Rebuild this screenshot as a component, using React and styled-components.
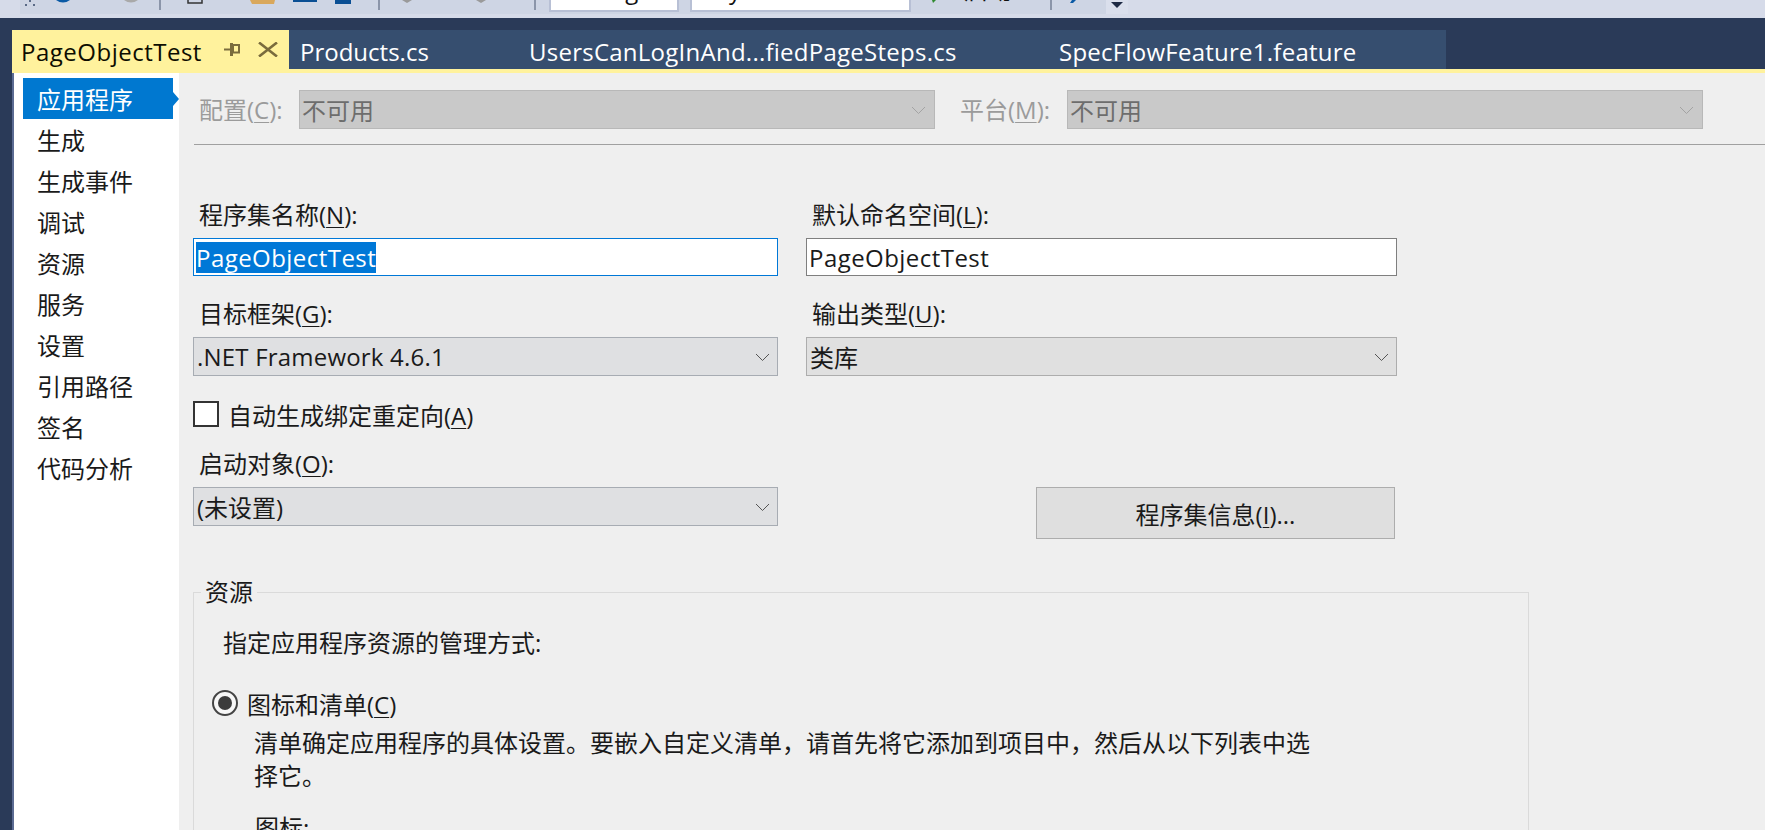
import React from 'react';
import styled, { createGlobalStyle } from 'styled-components';

const GlobalStyle = createGlobalStyle`
  html, body {
    margin: 0;
    padding: 0;
    overflow: hidden;
    background: #2a3a58;
  }
  * {
    box-sizing: border-box;
  }
`;

const Page = styled.div`
  width: 1765px;
  height: 830px;
  overflow: hidden;
  display: flex;
  flex-direction: column;
  background: #2a3a58;
  color: #1a1a1a;
  font-family: 'Open Sans', 'Noto Sans CJK SC', sans-serif;
  font-size: 24px;
`;

/* toolbar: only the lower edge of it is in the picture */
const Toolbar = styled.div`
  height: 18px;
  flex: none;
  display: flex;
  align-items: flex-start;
  background: #d6dbe9;
  padding-left: 20px;
`;

const ToolStrip = styled.div`
  width: 1086px;
  height: 14px;
  flex: none;
  display: flex;
  align-items: flex-start;
  background: #ced5e4;
  overflow: hidden;
`;

const Overflow = styled.div`
  width: 22px;
  height: 14px;
  flex: none;
  background: #dadfec;
  display: flex;
  justify-content: center;
  padding-top: 2px;
`;

const Separator = styled.div`
  width: 2px;
  height: 10px;
  flex: none;
  margin-left: ${(p) => p.$left}px;
  background: #8b95a9;
`;

const Frag = styled.svg`
  flex: none;
  display: block;
  margin-left: ${(p) => p.$left || 0}px;
`;

const ToolCombo = styled.div`
  width: ${(p) => p.$width}px;
  height: 12px;
  flex: none;
  margin-left: ${(p) => p.$left}px;
  background: #fff;
  border-right: 2px solid #b8c0d5;
  border-bottom: 2px solid #b8c0d5;
  border-left: 2px solid #b8c0d5;
  overflow: hidden;
`;

const ClippedText = styled.div`
  margin-top: ${(p) => p.$top}px;
  margin-left: ${(p) => p.$left}px;
  line-height: 30px;
  color: #111;
  white-space: nowrap;
`;

const RunLabel = styled.div`
  width: 60px;
  flex: none;
  margin-left: ${(p) => p.$left}px;
  margin-top: -25px;
  line-height: 30px;
  color: #111;
  white-space: nowrap;
`;

/* document tabs */
const TabWell = styled.div`
  flex: none;
  margin-top: 12px;
  padding-left: 12px;
  display: flex;
  flex-direction: column;
`;

const TabRow = styled.div`
  height: 39px;
  display: flex;
`;

const Tab = styled.div`
  width: ${(p) => p.$width}px;
  flex: none;
  display: flex;
  align-items: center;
  padding-left: ${(p) => p.$pad}px;
  background: ${(p) => (p.$active ? '#fff29d' : '#364e6f')};
  color: ${(p) => (p.$active ? '#0d0d00' : '#fff')};
  white-space: nowrap;
`;

const TabText = styled.span`
  padding-top: 4px;
  line-height: 39px;
  letter-spacing: ${(p) => p.$spacing || 0}px;
`;

const TabIcon = styled.svg`
  flex: none;
  margin-left: ${(p) => p.$left}px;
`;

const TabUnderline = styled.div`
  height: 4px;
  background: #fff29d;
`;

const Body = styled.div`
  flex: 1;
  min-height: 0;
  display: flex;
  padding-left: 12px;
`;

/* property page nav */
const Sidebar = styled.nav`
  width: 167px;
  flex: none;
  background: #fff;
  border-left: 2px solid #5b6b92;
  padding: 5px 6px 0 9px;
`;

const NavItem = styled.div`
  position: relative;
  height: 41px;
  line-height: 43px;
  padding-left: 14px;
  background: ${(p) => (p.$active ? '#0078d0' : 'transparent')};
  color: ${(p) => (p.$active ? '#fff' : '#1a1a1a')};

  ${(p) =>
    p.$active &&
    `
    &::after {
      content: '';
      position: absolute;
      right: -6px;
      top: 14px;
      border-left: 6px solid #0078d0;
      border-top: 7px solid transparent;
      border-bottom: 7px solid transparent;
    }
  `}
`;

const Content = styled.main`
  flex: 1;
  min-width: 0;
  background: #efefef;
  padding-top: 17px;
  overflow: hidden;
`;

const ConfigRow = styled.div`
  height: 39px;
  display: flex;
  align-items: center;
  padding-left: 20px;
`;

const ConfigLabel = styled.label`
  width: ${(p) => p.$width}px;
  flex: none;
  margin-left: ${(p) => p.$left || 0}px;
  color: #9b9b9b;
  line-height: 39px;
  white-space: nowrap;
`;

const Key = styled.u`
  text-underline-offset: 3px;
  text-decoration-thickness: 1px;
`;

const Combo = styled.div`
  width: ${(p) => p.$width}px;
  height: 39px;
  flex: none;
  display: flex;
  align-items: center;
  justify-content: space-between;
  padding: 0 ${(p) => (p.$disabled ? 8 : 7)}px 0 ${(p) => (p.$disabled ? 2 : 3)}px;
  background: ${(p) => (p.$disabled ? '#c9c9c9' : p.$cool ? '#dfe0e2' : '#e0e0e0')};
  border: 1px solid ${(p) => (p.$disabled ? '#b8b8b8' : p.$cool ? '#a7acb3' : '#adadad')};
  color: ${(p) => (p.$disabled ? '#6d6d6d' : '#1a1a1a')};
  white-space: nowrap;

  svg {
    margin-top: 2px;
  }
`;

const LatinValue = styled.span`
  letter-spacing: 0.2px;
`;

const Chevron = ({ color }) => (
  <svg width="15" height="9" viewBox="0 0 15 9">
    <polyline points="1,1 7.5,7.5 14,1" fill="none" stroke={color} strokeWidth="1" />
  </svg>
);

const Divider = styled.div`
  height: 1px;
  margin: 15px 0 0 15px;
  background: #a0a0a0;
`;

const Form = styled.div`
  padding: 55px 0 0 14px;
`;

const FormRow = styled.div`
  display: flex;
  gap: 28px;
  margin-top: ${(p) => p.$top || 0}px;
`;

const Field = styled.div`
  width: ${(p) => p.$width}px;
  flex: none;
`;

const FieldLabel = styled.label`
  display: block;
  height: 30px;
  line-height: 30px;
  margin-bottom: 8px;
  padding-left: 6px;
  white-space: nowrap;
`;

const TextBox = styled.div`
  height: 38px;
  display: flex;
  align-items: center;
  padding-left: 2px;
  background: #fff;
  border: 1px solid ${(p) => (p.$focused ? '#0078d7' : '#7f7f7f')};
  letter-spacing: 0.45px;
`;

const Selected = styled.span`
  height: 31px;
  line-height: 31px;
  background: #0078d7;
  color: #fff;
`;

const PlainValue = styled.span`
  line-height: 31px;
`;

const CheckRow = styled.label`
  display: flex;
  align-items: center;
  gap: 9px;
  height: 26px;
  margin-top: 25px;
`;

const CheckBox = styled.span`
  width: 26px;
  height: 26px;
  flex: none;
  background: #fff;
  border: 2px solid #333;
`;

const InfoButton = styled.button`
  display: block;
  width: 359px;
  height: 52px;
  margin: 38px 0 0 230px;
  padding: 0;
  background: #dfdfdf;
  border: 1px solid #adadad;
  color: #1a1a1a;
  font: inherit;
`;

const GroupBox = styled.fieldset`
  width: 1336px;
  margin: 38px 0 0 0;
  padding: 0 0 0 29px;
  min-width: 0;
  height: 300px;
  border: 1px solid #dadada;
`;

const GroupLegend = styled.legend`
  margin-left: -22px;
  padding: 0 4px;
  line-height: 30px;
`;

const GroupText = styled.div`
  line-height: 30px;
  margin: 21px 0 0 0;
`;

const RadioRow = styled.label`
  display: flex;
  align-items: center;
  gap: 9px;
  height: 30px;
  margin: 30px 0 0 -11px;
`;

const Radio = styled.span`
  width: 26px;
  height: 26px;
  flex: none;
  display: flex;
  align-items: center;
  justify-content: center;
  border: 2px solid #444;
  border-radius: 50%;
  background: #f7f7f7;

  &::after {
    content: '';
    width: 14px;
    height: 14px;
    border-radius: 50%;
    background: #3c3c3c;
  }
`;

const Explain = styled.p`
  width: 1064px;
  margin: 8px 0 0 31px;
  line-height: 33px;
`;

const IconLabel = styled.div`
  margin: 21px 0 0 32px;
  line-height: 30px;
`;

const navItems = ['应用程序', '生成', '生成事件', '调试', '资源', '服务', '设置', '引用路径', '签名', '代码分析'];

export default function App() {
  return (
    <Page>
      <GlobalStyle />
      <Toolbar>
        <ToolStrip>
          <Frag $left={5} width="10" height="6" viewBox="0 0 10 6">
            <rect x="0" y="4" width="2" height="2" fill="#5a6a86" />
            <rect x="4" y="0" width="2" height="2" fill="#5a6a86" />
            <rect x="8" y="4" width="2" height="2" fill="#5a6a86" />
          </Frag>
          <Frag $left={21} width="14" height="3" viewBox="0 0 14 3">
            <path d="M0 0 Q7 5 14 0 Z" fill="#0a5aa5" />
          </Frag>
          <Frag $left={54} width="14" height="3" viewBox="0 0 14 3">
            <path d="M0 0 Q7 5 14 0 Z" fill="#a9a9a9" />
          </Frag>
          <Separator $left={21} />
          <Frag $left={26} width="16" height="4" viewBox="0 0 16 4">
            <path d="M1 0 V3 H15 V0" fill="none" stroke="#333" strokeWidth="1.5" />
          </Frag>
          <Frag $left={47} width="25" height="4" viewBox="0 0 25 4">
            <path d="M0 0 H25 L24 4 H2 Z" fill="#d9a85c" />
          </Frag>
          <Frag $left={18} width="24" height="2" viewBox="0 0 24 2">
            <rect width="24" height="2" fill="#0a4f94" />
          </Frag>
          <Frag $left={18} width="16" height="4" viewBox="0 0 16 4">
            <rect width="16" height="4" fill="#0a4f94" />
          </Frag>
          <Separator $left={27} />
          <Frag $left={22} width="10" height="3" viewBox="0 0 10 3">
            <path d="M0 0 H10 L5 3 Z" fill="#9a9a9a" />
          </Frag>
          <Frag $left={64} width="10" height="3" viewBox="0 0 10 3">
            <path d="M0 0 H10 L5 3 Z" fill="#9a9a9a" />
          </Frag>
          <Separator $left={48} />
          <ToolCombo $left={13} $width={130}>
            <ClippedText $top={-25} $left={14}>Debug</ClippedText>
          </ToolCombo>
          <ToolCombo $left={11} $width={221}>
            <ClippedText $top={-25} $left={7}>Any CPU</ClippedText>
          </ToolCombo>
          <Frag $left={21} width="4" height="3" viewBox="0 0 4 3">
            <path d="M0 0 H4 L1 3 Z" fill="#2f8a2f" />
          </Frag>
          <RunLabel $left={28}>启动</RunLabel>
          <Separator $left={26} />
          <Frag $left={18} width="6" height="3" viewBox="0 0 6 3">
            <path d="M2 0 H6 L3 3 H0 Z" fill="#0a5aa5" />
          </Frag>
        </ToolStrip>
        <Overflow>
          <svg width="12" height="6" viewBox="0 0 12 6">
            <path d="M0 0 H12 L6 6 Z" fill="#1e2a44" />
          </svg>
        </Overflow>
      </Toolbar>

      <TabWell>
        <TabRow>
          <Tab $active $width={277} $pad={9}>
            <TabText $spacing={0.5}>PageObjectTest</TabText>
            <TabIcon $left={22} width="16" height="13" viewBox="0 0 16 13">
              <path d="M0 6.5 H6" stroke="#7a6c3d" strokeWidth="2" />
              <rect x="6" y="0" width="3" height="13" fill="#7a6c3d" />
              <rect x="9" y="2" width="6" height="7.5" fill="none" stroke="#7a6c3d" strokeWidth="2" />
            </TabIcon>
            <TabIcon $left={18} width="20" height="15" viewBox="0 0 20 15">
              <path d="M1 0.5 L19 14.5 M19 0.5 L1 14.5" fill="none" stroke="#7a6c3d" strokeWidth="2.6" />
            </TabIcon>
          </Tab>
          <Tab $width={230} $pad={11}>
            <TabText>Products.cs</TabText>
          </Tab>
          <Tab $width={529} $pad={10}>
            <TabText $spacing={0.25}>UsersCanLogInAnd...fiedPageSteps.cs</TabText>
          </Tab>
          <Tab $width={398} $pad={11}>
            <TabText $spacing={0.25}>SpecFlowFeature1.feature</TabText>
          </Tab>
        </TabRow>
        <TabUnderline />
      </TabWell>

      <Body>
        <Sidebar>
          {navItems.map((item, i) => (
            <NavItem key={item} $active={i === 0}>{item}</NavItem>
          ))}
        </Sidebar>
        <Content>
          <ConfigRow>
            <ConfigLabel $width={100}>配置(<Key>C</Key>):</ConfigLabel>
            <Combo $disabled $width={636}>不可用<Chevron color="#a3a3a3" /></Combo>
            <ConfigLabel $width={107} $left={25}>平台(<Key>M</Key>):</ConfigLabel>
            <Combo $disabled $width={636}>不可用<Chevron color="#a3a3a3" /></Combo>
          </ConfigRow>
          <Divider />
          <Form>
            <FormRow>
              <Field $width={585}>
                <FieldLabel>程序集名称(<Key>N</Key>):</FieldLabel>
                <TextBox $focused><Selected>PageObjectTest</Selected></TextBox>
              </Field>
              <Field $width={591}>
                <FieldLabel>默认命名空间(<Key>L</Key>):</FieldLabel>
                <TextBox><PlainValue>PageObjectTest</PlainValue></TextBox>
              </Field>
            </FormRow>
            <FormRow $top={23}>
              <Field $width={585}>
                <FieldLabel>目标框架(<Key>G</Key>):</FieldLabel>
                <Combo $cool $width={585}><LatinValue>.NET Framework 4.6.1</LatinValue><Chevron color="#555" /></Combo>
              </Field>
              <Field $width={591}>
                <FieldLabel>输出类型(<Key>U</Key>):</FieldLabel>
                <Combo $width={591}>类库<Chevron color="#555" /></Combo>
              </Field>
            </FormRow>
            <CheckRow>
              <CheckBox />
              <span>自动生成绑定重定向(<Key>A</Key>)</span>
            </CheckRow>
            <FormRow $top={22}>
              <Field $width={585}>
                <FieldLabel>启动对象(<Key>O</Key>):</FieldLabel>
                <Combo $cool $width={585}>(未设置)<Chevron color="#555" /></Combo>
              </Field>
              <Field $width={591}>
                <InfoButton>程序集信息(<Key>I</Key>)...</InfoButton>
              </Field>
            </FormRow>
            <GroupBox>
              <GroupLegend>资源</GroupLegend>
              <GroupText>指定应用程序资源的管理方式:</GroupText>
              <RadioRow>
                <Radio />
                <span>图标和清单(<Key>C</Key>)</span>
              </RadioRow>
              <Explain>清单确定应用程序的具体设置。要嵌入自定义清单，请首先将它添加到项目中，然后从以下列表中选择它。</Explain>
              <IconLabel>图标:</IconLabel>
            </GroupBox>
          </Form>
        </Content>
      </Body>
    </Page>
  );
}
